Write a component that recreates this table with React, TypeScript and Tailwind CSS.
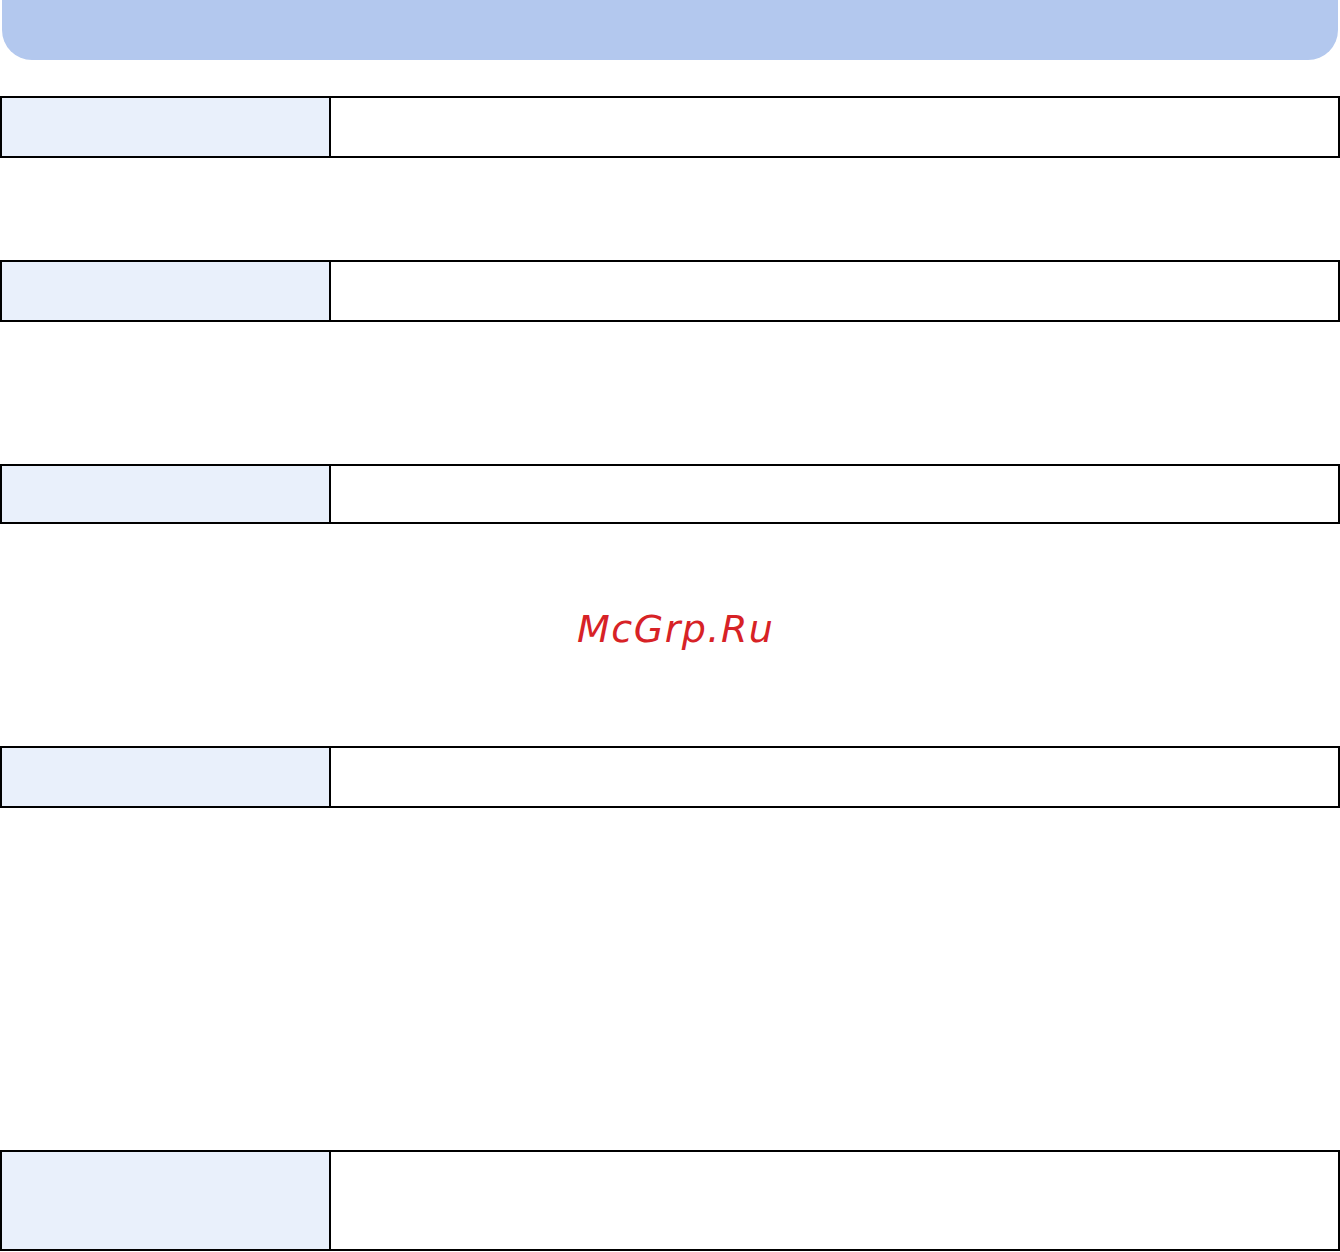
export default function App() {
  const Row = ({ h }: { h: string }) => (
    <div className={`flex w-full border-2 border-black ${h}`}>
      <div className="w-[329px] shrink-0 border-r-2 border-black bg-[#e9f0fb]" />
      <div className="flex-1 bg-white" />
    </div>
  );

  return (
    <div className="w-[1340px] min-h-[1252px] bg-white" style={{ fontFamily: '"DejaVu Sans", sans-serif' }}>
      <div className="mx-[2px] h-[60px] rounded-b-[30px] bg-[#b3c8ee]" />

      <div className="mt-[36px]">
        <Row h="h-[62px]" />
      </div>
      <div className="mt-[102px]">
        <Row h="h-[62px]" />
      </div>
      <div className="mt-[142px]">
        <Row h="h-[60px]" />
      </div>

      <div className="h-[222px] pl-[577px] pt-[86px]">
        <div className="text-[38px] leading-none italic tracking-[1.5px] text-[#d72226]">McGrp.Ru</div>
      </div>

      <Row h="h-[62px]" />

      <div className="mt-[342px]">
        <Row h="h-[101px]" />
      </div>
    </div>
  );
}
